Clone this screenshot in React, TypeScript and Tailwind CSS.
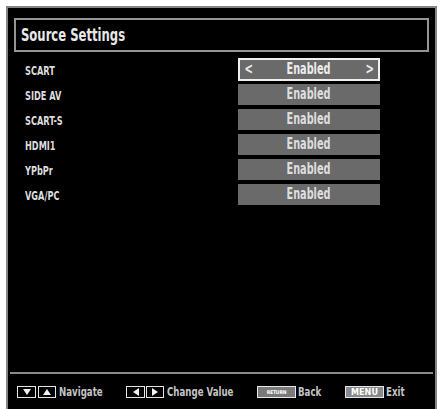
import React from 'react'

const font = { fontFamily: '"DejaVu Sans Condensed", "Liberation Sans", sans-serif' }

const sources = ['SCART', 'SIDE AV', 'SCART-S', 'HDMI1', 'YPbPr', 'VGA/PC']

function KeyBox({ children, className = '' }: { children: React.ReactNode; className?: string }) {
  return (
    <div
      className={`flex h-[12px] items-center justify-center border-[1.5px] border-[#e6e6e6] ${className}`}
    >
      {children}
    </div>
  )
}

function Tri({ dir }: { dir: 'up' | 'down' | 'left' | 'right' }) {
  const pts = {
    up: '1,8 5,2 9,8',
    down: '1,2 9,2 5,8',
    left: '8,1 8,9 2,5',
    right: '2,1 2,9 8,5',
  }[dir]
  return (
    <svg width="10" height="10" viewBox="0 0 10 10">
      <polygon points={pts} fill="#f2f2f2" />
    </svg>
  )
}

export default function App() {
  return (
    <div className="h-[409px] w-[443px] overflow-hidden bg-white px-[6px] pt-[6px]" style={font}>
      <div className="flex h-[408px] flex-col border-2 border-[#858585] bg-black">
        {/* Title */}
        <div className="mx-[6px] mt-[10px] flex h-[34px] items-center border-2 border-[#959595] pl-[5px]">
          <span className="inline-block origin-left scale-x-[0.76] whitespace-nowrap text-[17px] font-bold leading-none text-[#e8e8e8]">
            Source Settings
          </span>
        </div>

        {/* Rows */}
        <div className="mt-[5px] flex flex-col">
          {sources.map((name, i) => (
            <div key={name} className="flex h-[25px] items-center">
              <div className="w-[230px] pl-[17px]">
                <span className="inline-block origin-left scale-x-[0.7] whitespace-nowrap text-[13px] font-bold leading-none text-[#dcdcdc]">
                  {name}
                </span>
              </div>
              {i === 0 ? (
                <div className="flex h-[23px] w-[142px] items-center justify-between border-2 border-[#f0f0f0] bg-[#6a6a6a] px-[3px] text-[15px] font-bold leading-none text-[#ececec]">
                  <span className="inline-block scale-x-[0.75]">&lt;</span>
                  <span className="inline-block scale-x-[0.72]">Enabled</span>
                  <span className="inline-block scale-x-[0.75]">&gt;</span>
                </div>
              ) : (
                <div className="flex h-[21px] w-[142px] items-center justify-center bg-[#6a6a6a] text-[15px] font-bold leading-none text-[#dedede]">
                  <span className="inline-block scale-x-[0.72]">Enabled</span>
                </div>
              )}
            </div>
          ))}
        </div>

        <div className="flex-1" />

        {/* Footer */}
        <div className="mx-[2px] h-[2px] bg-[#8a8a8a]" />
        <div className="flex h-[38px] items-start pt-[12px] pl-[9px] text-[12px] font-bold leading-none text-[#c4c4c4]">
          <div className="flex w-[109px] items-center gap-[2px]">
            <KeyBox className="w-[19px]">
              <Tri dir="down" />
            </KeyBox>
            <KeyBox className="w-[18px]">
              <Tri dir="up" />
            </KeyBox>
            <span className="ml-[1px] inline-block origin-left scale-x-[0.8] whitespace-nowrap">Navigate</span>
          </div>
          <div className="flex w-[131px] items-center">
            <KeyBox className="w-[19px]">
              <Tri dir="left" />
            </KeyBox>
            <KeyBox className="ml-[1px] w-[18px]">
              <Tri dir="right" />
            </KeyBox>
            <span className="ml-[3px] inline-block origin-left scale-x-[0.8] whitespace-nowrap">Change Value</span>
          </div>
          <div className="flex w-[88px] items-center">
            <KeyBox className="w-[39px] bg-[#7a7a7a]">
              <span className="text-[5px] font-bold leading-none tracking-tight text-white">RETURN</span>
            </KeyBox>
            <span className="ml-[2px] inline-block origin-left scale-x-[0.8] whitespace-nowrap">Back</span>
          </div>
          <div className="flex items-center">
            <KeyBox className="w-[39px] bg-[#8a8a8a]">
              <span className="text-[9px] font-bold leading-none text-white">MENU</span>
            </KeyBox>
            <span className="ml-[2px] inline-block origin-left scale-x-[0.8] whitespace-nowrap">Exit</span>
          </div>
        </div>
      </div>
    </div>
  )
}
